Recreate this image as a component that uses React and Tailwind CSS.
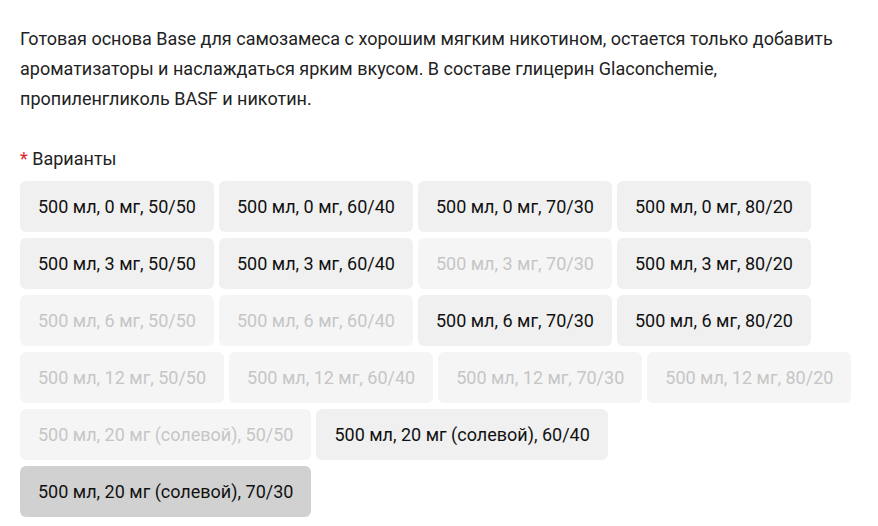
const variants = [
  ["500 мл, 0 мг, 50/50", "on"],
  ["500 мл, 0 мг, 60/40", "on"],
  ["500 мл, 0 мг, 70/30", "on"],
  ["500 мл, 0 мг, 80/20", "on"],
  ["500 мл, 3 мг, 50/50", "on"],
  ["500 мл, 3 мг, 60/40", "on"],
  ["500 мл, 3 мг, 70/30", "off"],
  ["500 мл, 3 мг, 80/20", "on"],
  ["500 мл, 6 мг, 50/50", "off"],
  ["500 мл, 6 мг, 60/40", "off"],
  ["500 мл, 6 мг, 70/30", "on"],
  ["500 мл, 6 мг, 80/20", "on"],
  ["500 мл, 12 мг, 50/50", "off"],
  ["500 мл, 12 мг, 60/40", "off"],
  ["500 мл, 12 мг, 70/30", "off"],
  ["500 мл, 12 мг, 80/20", "off"],
  ["500 мл, 20 мг (солевой), 50/50", "off"],
  ["500 мл, 20 мг (солевой), 60/40", "on"],
  ["500 мл, 20 мг (солевой), 70/30", "selected"],
];

const styles = {
  on: "bg-[#f0f0f0] text-[#111]",
  off: "bg-[#f5f5f5] text-[#c6c6c6]",
  selected: "bg-[#d1d1d1] text-[#111]",
};

export default function App() {
  return (
    <div className="min-h-screen bg-white px-5 pt-[24px] font-['Roboto',sans-serif] text-[18px] text-[#222]">
      <p className="max-w-[840px] leading-[30px]">
        Готовая основа Base для самозамеса с хорошим мягким никотином, остается только добавить
        ароматизаторы и наслаждаться ярким вкусом. В составе глицерин Glaconchemie,
        пропиленгликоль BASF и никотин.
      </p>

      <div className="mt-[33px] leading-6">
        <span className="text-[#e0252b]">*</span> Варианты
      </div>

      <div className="mt-[10px] flex max-w-[840px] flex-wrap gap-x-[5px] gap-y-[6px]">
        {variants.map(([label, state]) => (
          <button
            key={label}
            type="button"
            className={`h-[51px] rounded-[6px] px-[18px] text-[18px] ${styles[state]}`}
          >
            {label}
          </button>
        ))}
      </div>
    </div>
  );
}
